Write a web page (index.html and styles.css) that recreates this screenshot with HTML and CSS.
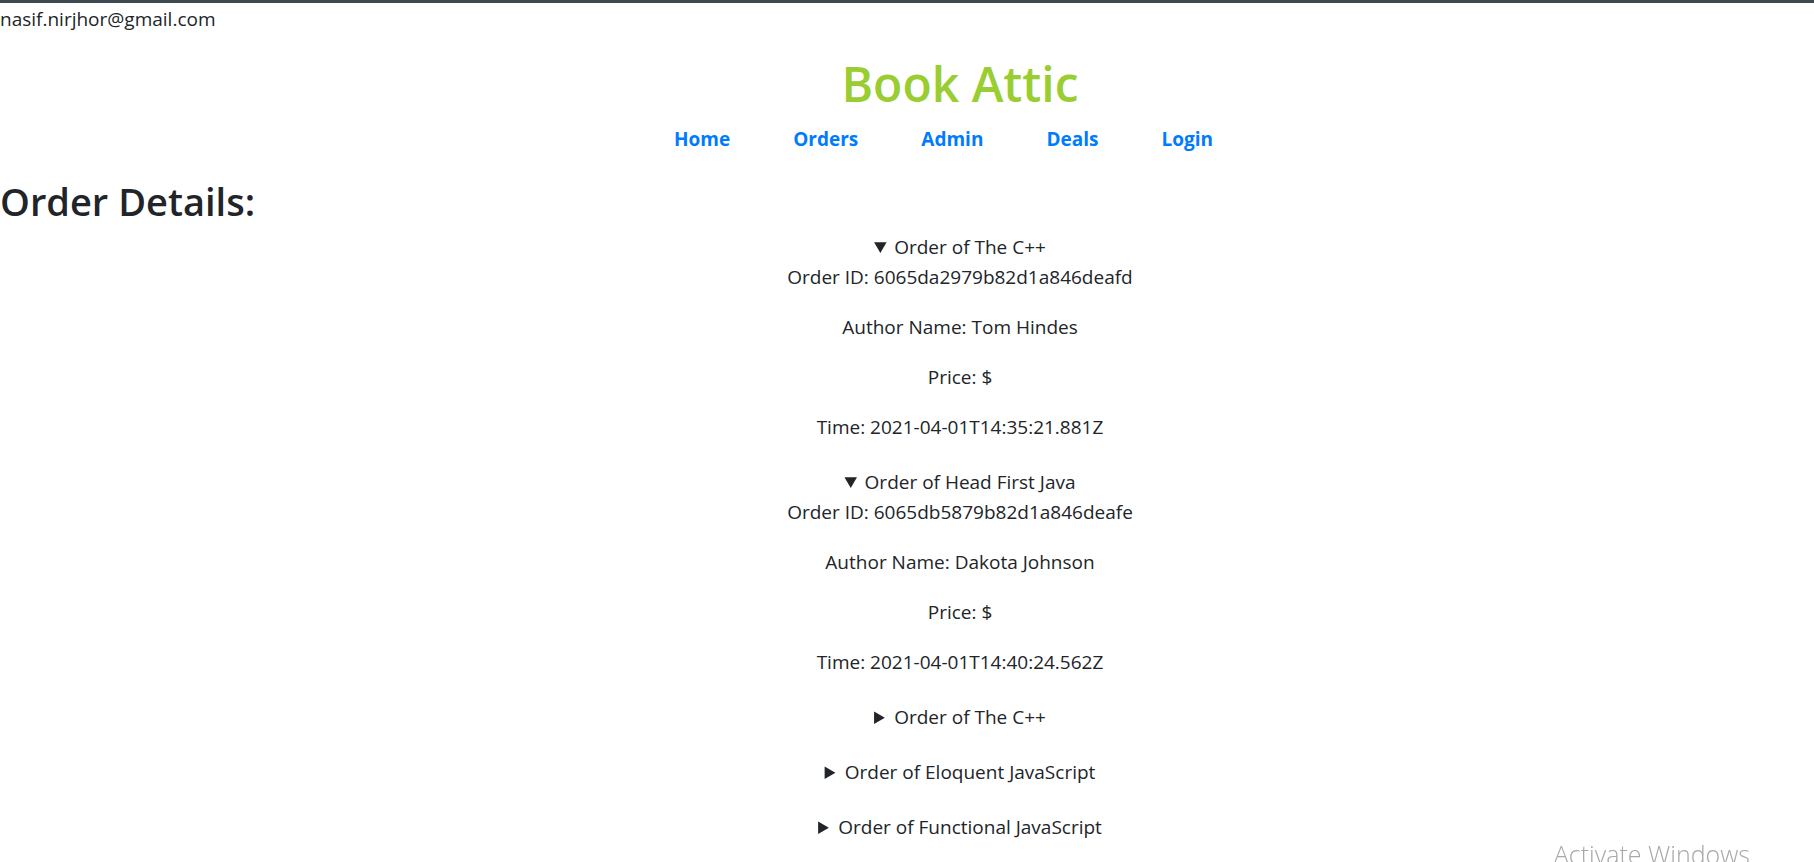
FILE: index.html
```html
<!DOCTYPE html>
<html lang="en">
<head>
<meta charset="utf-8">
<title>Book Attic</title>
<link rel="stylesheet" href="styles.css">
</head>
<body>
<div class="topbar"></div>
<div class="user-email">nasif.nirjhor@gmail.com</div>
<header class="site-header">
  <h1 class="brand">Book Attic</h1>
  <ul class="nav">
    <li><a href="#">Home</a></li>
    <li><a href="#">Orders</a></li>
    <li><a href="#">Admin</a></li>
    <li><a href="#">Deals</a></li>
    <li><a href="#">Login</a></li>
  </ul>
</header>
<h2 class="page-title">Order Details:</h2>
<main class="orders">
  <details class="order" open>
    <summary>Order of The C++</summary>
    <p>Order ID: 6065da2979b82d1a846deafd</p>
    <p>Author Name: Tom Hindes</p>
    <p>Price: $</p>
    <p>Time: 2021-04-01T14:35:21.881Z</p>
  </details>
  <details class="order" open>
    <summary>Order of Head First Java</summary>
    <p>Order ID: 6065db5879b82d1a846deafe</p>
    <p>Author Name: Dakota Johnson</p>
    <p>Price: $</p>
    <p>Time: 2021-04-01T14:40:24.562Z</p>
  </details>
  <details class="order">
    <summary>Order of The C++</summary>
    <p>Order ID: -</p>
  </details>
  <details class="order">
    <summary>Order of Eloquent JavaScript</summary>
    <p>Order ID: -</p>
  </details>
  <details class="order">
    <summary>Order of Functional JavaScript</summary>
    <p>Order ID: -</p>
  </details>
</main>
<div class="watermark">Activate Windows</div>
</body>
</html>
```

FILE: styles.css
```css
html, body {
  margin: 0;
  padding: 0;
  background: #ffffff;
}
body {
  font-family: "Open Sans", "Noto Sans", sans-serif;
  font-size: 19px;
  line-height: 30px;
  color: #212529;
  overflow: hidden;
}
.topbar {
  height: 3px;
  background: #3c4a4f;
}
.user-email {
  padding-top: 1px;
  height: 30px;
}
.site-header {
  padding-left: 106px;
  text-align: center;
}
.brand {
  margin: 20px 0 0;
  font-size: 48px;
  line-height: 60px;
  font-weight: 600;
  color: #9acd32;
}
.nav {
  list-style: none;
  margin: 10px 0 0;
  padding: 0 0 0 30px;
  display: flex;
  justify-content: center;
}
.nav li {
  margin-right: 63px;
}
.nav a {
  color: #007bff;
  font-weight: 700;
  text-decoration: none;
}
.page-title {
  margin: 23px 0 7px;
  font-size: 38px;
  line-height: 48px;
  font-weight: 600;
  color: #212529;
}
.orders {
  padding-left: 106px;
  text-align: center;
}
.order {
  margin-bottom: 25px;
}
.order summary {
  cursor: pointer;
}
.order p {
  margin: 0 0 20px;
}
.watermark {
  position: fixed;
  right: 64px;
  top: 839px;
  font-family: "Open Sans", sans-serif;
  font-size: 25px;
  font-weight: 300;
  color: #a8a8a8;
  line-height: 30px;
}
```
